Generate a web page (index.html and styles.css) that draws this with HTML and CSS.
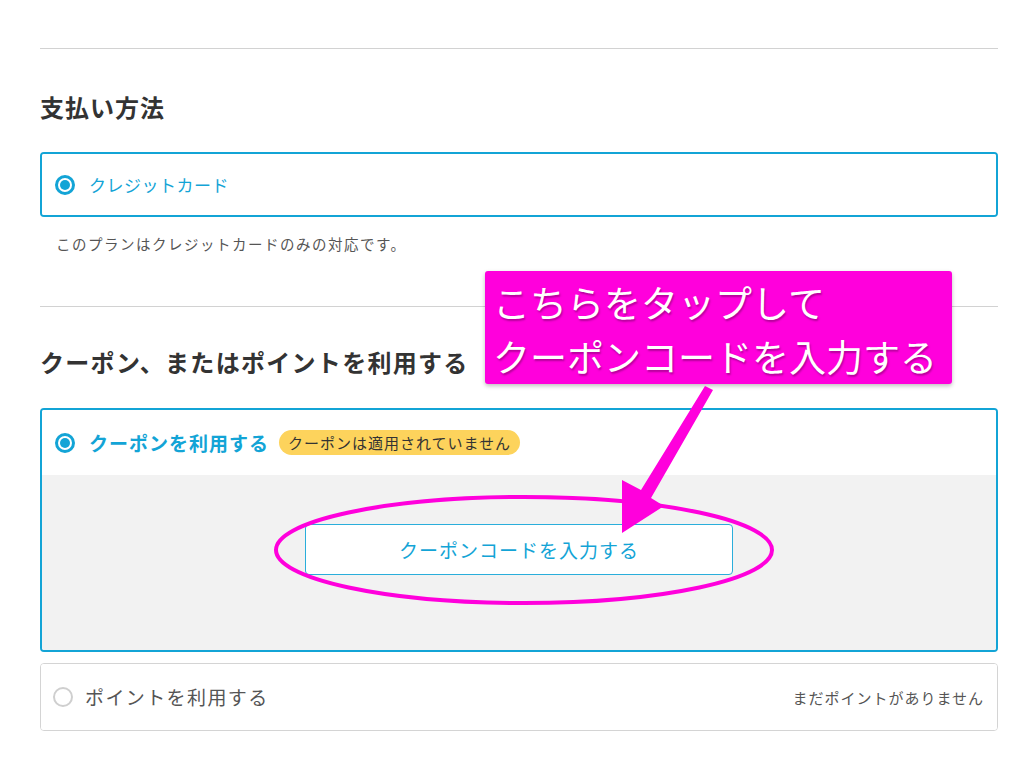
FILE: index.html
```html
<!DOCTYPE html>
<html lang="ja">
<head>
<meta charset="utf-8">
<link rel="stylesheet" href="styles.css">
</head>
<body>
<main class="page">
  <hr class="divider">
  <h2 class="heading heading-pay">支払い方法</h2>
  <div class="option selected">
    <div class="option-head">
      <span class="radio on"></span>
      <span class="option-label">クレジットカード</span>
    </div>
  </div>
  <p class="note">このプランはクレジットカードのみの対応です。</p>
  <hr class="divider divider-2">
  <h2 class="heading heading-coupon">クーポン、またはポイントを利用する</h2>
  <div class="option selected">
    <div class="option-head tall">
      <span class="radio on"></span>
      <span class="option-label strong">クーポンを利用する</span>
      <span class="badge">クーポンは適用されていません</span>
    </div>
    <div class="option-body">
      <button class="code-btn" type="button">クーポンコードを入力する</button>
    </div>
  </div>
  <div class="option plain">
    <div class="option-head taller">
      <span class="radio off"></span>
      <span class="option-label muted">ポイントを利用する</span>
      <span class="side-note">まだポイントがありません</span>
    </div>
  </div>
</main>

<div class="callout">こちらをタップして<br>クーポンコードを入力する</div>
<svg class="annot" width="1024" height="773" viewBox="0 0 1024 773" aria-hidden="true">
  <ellipse cx="524" cy="550" rx="248" ry="53" fill="none" stroke="#ff00dc" stroke-width="4"/>
  <polygon points="705,386 641,490 622,480 622,533 664,506 651,498 713,390" fill="#ff00dc"/>
</svg>
</body>
</html>
```

FILE: styles.css
```css
* { box-sizing: border-box; }
html, body {
  margin: 0;
  padding: 0;
  background: #fff;
}
body {
  width: 1024px;
  height: 773px;
  overflow: hidden;
  position: relative;
  font-family: "Noto Sans CJK JP", "Noto Sans", sans-serif;
  color: #333;
}
.page {
  padding: 48px 26px 0 40px;
  display: flex;
  flex-direction: column;
}
.divider {
  margin: 0;
  border: 0;
  border-top: 1px solid #d2d2d2;
  height: 0;
}
.heading {
  margin: 0;
  font-size: 24px;
  line-height: 36px;
  font-weight: 700;
  letter-spacing: 1px;
  color: #333;
}
.heading-pay { margin-top: 40px; margin-bottom: 27px; }
.heading-coupon { margin-top: 37px; margin-bottom: 28px; letter-spacing: 1.3px; }
.divider-2 { margin-top: 52px; }

.option {
  border-radius: 4px;
  overflow: hidden;
}
.option.selected { border: 2px solid #13a4d6; }
.option.plain {
  border: 1px solid #d4d4d4;
  margin-top: 11px;
}
.option-head {
  height: 61px;
  display: flex;
  align-items: center;
  padding: 0 12px 0 13px;
  background: #fff;
}
.option-head.tall { height: 65px; }
.option-head.taller { height: 66px; }
.plain .option-head { padding-left: 12px; padding-right: 13px; }

.radio {
  width: 20px;
  height: 20px;
  border-radius: 50%;
  flex: none;
  display: flex;
  align-items: center;
  justify-content: center;
}
.radio.on { border: 3px solid #13a4d6; }
.radio.on::after {
  content: "";
  width: 10px;
  height: 10px;
  border-radius: 50%;
  background: #13a4d6;
}
.radio.off { border: 2px solid #cfcfcf; }

.option-label {
  margin-left: 14px;
  font-size: 17px;
  letter-spacing: 0.5px;
  color: #13a4d6;
  line-height: 24px;
}
.option-label.strong {
  font-weight: 700;
  font-size: 19px;
  letter-spacing: 1px;
}
.option-label.muted {
  color: #555;
  font-size: 19px;
  letter-spacing: 1.4px;
  margin-left: 12px;
}
.badge {
  margin-left: 10px;
  background: #fdd35c;
  color: #333;
  font-size: 15px;
  letter-spacing: 1px;
  line-height: 25px;
  height: 25px;
  padding: 0 9px;
  border-radius: 13px;
}
.side-note {
  margin-left: auto;
  font-size: 15px;
  letter-spacing: 1px;
  color: #555;
}
.note {
  margin: 17px 0 0 16px;
  font-size: 14.5px;
  line-height: 20px;
  letter-spacing: 1.5px;
  color: #555;
}
.option-body {
  background: #f2f2f2;
  padding: 49px 0 75px;
  display: flex;
  justify-content: center;
}
.code-btn {
  width: 428px;
  height: 51px;
  background: #fff;
  border: 1px solid #2aaedb;
  border-radius: 4px;
  font-family: inherit;
  font-size: 19px;
  letter-spacing: 1px;
  color: #13a4d6;
  cursor: pointer;
}

.callout {
  position: absolute;
  left: 485px;
  top: 271px;
  width: 467px;
  height: 113px;
  padding: 4px 0 0 8px;
  background: #ff00dc;
  border-radius: 3px;
  color: #fff;
  font-size: 37px;
  line-height: 54px;
  white-space: nowrap;
  text-shadow: 1px 2px 2px rgba(120, 0, 100, 0.55);
  box-shadow: 0 2px 4px rgba(0, 0, 0, 0.25);
}
.annot {
  position: absolute;
  left: 0;
  top: 0;
  pointer-events: none;
}
```
